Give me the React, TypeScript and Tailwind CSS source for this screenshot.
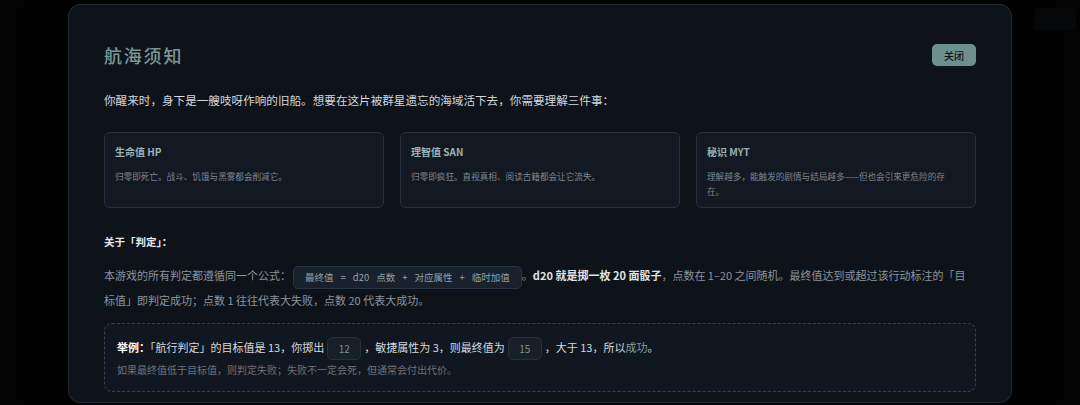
const cards = [
  { title: "生命值 HP", desc: "归零即死亡。战斗、饥饿与黑雾都会削减它。" },
  { title: "理智值 SAN", desc: "归零即疯狂。直视真相、阅读古籍都会让它流失。" },
  { title: "秘识 MYT", desc: "理解越多，能触发的剧情与结局越多——但也会引来更危险的存在。" },
];

const formula = ["最终值", "=", "d20", "点数", "+", "对应属性", "+", "临时加值"];

function Pill({ value }: { value: string }) {
  return (
    <span className="mx-[3px] inline-flex h-[23px] w-[34px] items-center justify-center rounded-[5px] border border-[#27303b] bg-[#171f29] align-middle text-[10px] text-[#7e8f99]">
      {value}
    </span>
  );
}

export default function App() {
  return (
    <div
      className="relative h-[405px] w-full overflow-hidden bg-[#050608]"
      style={{ fontFamily: '"Noto Sans CJK SC", "Noto Sans", sans-serif' }}
    >
      {/* page behind the overlay */}
      <div className="flex justify-end px-[4px] pt-[8px]">
        <div className="h-[22px] w-[42px] rounded-[4px] bg-[#0c0e11]" />
      </div>

      <div className="absolute inset-0 flex justify-center bg-black/40 pt-[4px]">
        <div className="h-[399px] w-[944px] overflow-hidden rounded-[12px] border border-[#222a34] bg-[#0e1319] p-[35px] shadow-[0_0_40px_rgba(0,0,0,0.6)]">
          <div className="flex items-center justify-between">
            <h1 className="text-[18px] leading-[30px] font-medium tracking-[0.1em] text-[#7b9696]">
              航海须知
            </h1>
            <button className="h-[22px] w-[44px] rounded-[5px] bg-[#6e8f8f] text-[10px] font-medium text-[#0d1318]">
              关闭
            </button>
          </div>

          <p className="mt-[20px] text-[11.6px] leading-[20px] text-[#d3d7dc]">
            你醒来时，身下是一艘吱呀作响的旧船。想要在这片被群星遗忘的海域活下去，你需要理解三件事：
          </p>

          <div className="mt-[22px] grid grid-cols-3 gap-[16px]">
            {cards.map((c) => (
              <div
                key={c.title}
                className="h-[76px] rounded-[6px] border border-[#29313c] bg-[#131923] pt-[12px] pr-[14px] pb-[8px] pl-[10px]"
              >
                <div className="text-[10px] leading-[14px] font-semibold text-[#9cb1b1]">
                  {c.title}
                </div>
                <div className="mt-[10px] text-[8.6px] leading-[15px] text-[#7d8590]">
                  {c.desc}
                </div>
              </div>
            ))}
          </div>

          <h2 className="mt-[26px] text-[10.5px] leading-[16px] font-bold text-[#e6e8eb]">
            关于「判定」：
          </h2>

          <p className="mt-[14px] text-[11px] leading-[23px] text-[#8b939d]">
            本游戏的所有判定都遵循同一个公式：
            <span className="ml-[2px] inline-flex h-[23px] items-center gap-[7px] rounded-[5px] border border-[#2a3543] bg-[#19212c] px-[11px] align-middle text-[9.5px] text-[#8ea2aa]">
              {formula.map((f, i) => (
                <span key={i}>{f}</span>
              ))}
            </span>
            。<span className="font-semibold text-[#dfe3e7]">d20 就是掷一枚 20 面骰子</span>
            ，点数在 1–20 之间随机。最终值达到或超过该行动标注的「目标值」即判定成功；点数 1 往往代表大失败，点数 20 代表大成功。
          </p>

          <div className="mt-[11px] rounded-[8px] border border-dashed border-[#3a424e] bg-[#111720] px-[12px] pt-[11px] pb-[13px]">
            <p className="text-[11px] leading-[24px] text-[#d5d9de]">
              <span className="font-bold text-white">举例：</span>
              「航行判定」的目标值是 13，你掷出
              <Pill value="12" />
              ，敏捷属性为 3，则最终值为
              <Pill value="15" />
              ，大于 13，所以<span className="text-[#7fa3a3]">成功</span>。
            </p>
            <p className="mt-[2px] text-[10px] leading-[16px] text-[#6c737d]">
              如果最终值低于目标值，则判定失败；失败不一定会死，但通常会付出代价。
            </p>
          </div>
        </div>
      </div>
    </div>
  );
}
